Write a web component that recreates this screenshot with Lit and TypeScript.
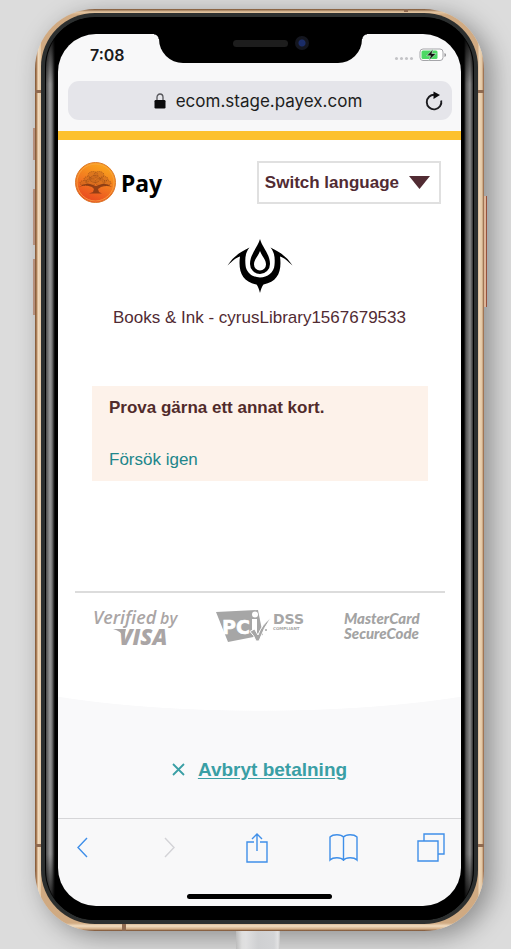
import { LitElement, html, css, svg } from "lit";
import { customElement } from "lit/decorators.js";

const lock = html`<svg class="lock" width="12" height="16" viewBox="0 0 12 16" aria-hidden="true">
  <path d="M3 8V4.300a3 3.300 0 0 1 6 0V8" fill="none" stroke="#55555a" stroke-width="1.300" />
  <rect x="0.500" y="7" width="11" height="8.500" rx="1.200" fill="#0b0b0d" />
</svg>`;

const reload = html`<svg width="18" height="20" viewBox="0 0 18 20" aria-hidden="true">
  <path d="M16.200 9.500a7.300 7.300 0 1 1-6.500-5.700" fill="none" stroke="#1b1b1f" stroke-width="1.900" />
  <path d="M8.500 0.500 15 4 8.500 8z" fill="#0b0b0d" />
</svg>`;

const battery = html`<svg width="28" height="14" viewBox="0 0 28 14" aria-label="Battery charging" role="img">
  <rect x="1" y="1" width="23" height="11.500" rx="3" fill="#fff" stroke="#a5a5a9" />
  <rect x="2.500" y="2.500" width="16" height="8.500" rx="1.500" fill="#4cd964" />
  <path d="M25.500 5v4q1.500-.6 1.500-2t-1.500-2z" fill="#8a8a8e" />
  <path d="M14.300 1 7.600 7.800h4L9.800 12.500l7.400-7h-4.400z" fill="#111" stroke="#d9f7df" stroke-width=".6" />
</svg>`;

const crowns: Array<[number, number, number]> = [
  [9, 21, 4], [13, 17, 4], [18, 13, 5], [24, 13, 5], [29, 17, 4], [32, 21, 4], [16, 20, 5], [25, 20, 5], [20, 17, 5],
];

const coin = html`<svg width="41" height="42" viewBox="0 0 41 42" aria-hidden="true">
  <defs>
    <linearGradient id="coin" x1="0.700" y1="0" x2="0.300" y2="1">
      <stop offset="0" stop-color="#fba91b" /><stop offset=".5" stop-color="#f37a20" /><stop offset="1" stop-color="#e8441f" />
    </linearGradient>
  </defs>
  <circle cx="20.500" cy="20.500" r="20" fill="url(#coin)" stroke="#dc7a2c" stroke-width="1" />
  <circle cx="20.500" cy="20.500" r="18.500" fill="none" stroke="#f9a645" stroke-width=".8" />
  ${crowns.map(([x, y, r]) => svg`<ellipse cx=${x} cy=${y} rx=${r} ry=${r - 1.5} fill="#c9671d" stroke="#8a4616" stroke-width=".8" stroke-dasharray="1 1" fill-opacity=".55" stroke-opacity=".8" />`)}
  <path d="M4 25q6-3 13 0l2 2-1 3-4 1.500h13L24 30l-1-3 3-2q6-2 11 0-5-4-10-3l-6 2-6-2q-6-1-11 3z" fill="#7d3513" fill-opacity=".8" />
</svg>`;

const emblem = html`<svg width="66" height="54" viewBox="0 0 66 54" role="img" aria-label="Books &amp; Ink">
  <path fill-rule="evenodd" d="M33 0C35 8 43 15 43 25a10 10 0 0 1-20 0C23 15 31 8 33 0zM33 12C31.500 17 27 20 27 25.500a6 6 0 0 0 12 0C39 20 34.500 17 33 12z" />
  <path d="M22.500 8.500C18 14 18 20 18.500 26c.5 7.500 7 12.500 14.500 12.500S47 33.500 47.500 26C48 20 48 14 43.500 8.500 53 13 60 18 65.500 26.500 60 21.500 57 18.500 53 17.500 55 32 51 43 36.500 45.500 35 47.500 34 50 33 54 32 50 31 47.500 29.500 45.500 15 43 11 32 13 17.500 9 18.500 6 21.500.5 26.500 6 18 13 13 22.500 8.500z" />
</svg>`;

const visa = html`<svg width="88" height="40" viewBox="0 0 88 40" role="img" aria-label="Verified by VISA" class="brand" fill="#aaa5a5">
  <text x="0" y="15" font-size="18" font-weight="600">Verified</text>
  <text x="67" y="15" font-size="16" font-weight="600">by</text>
  <text x="26" y="36" font-size="22" font-weight="800">VISA</text>
  <path d="M20 20h13l-2 8q-3-6-11-8z" />
</svg>`;

const pci = html`<svg width="88" height="36" viewBox="0 0 88 36" role="img" aria-label="PCI DSS compliant" class="pci">
  <path d="M-2 3 40 1 45 26 10 33z" fill="#a6a6a6" />
  <text x="4" y="25" font-size="19" fill="#fff" stroke="#fff" stroke-width=".6">PC</text>
  <path d="M34 10h5v13h-5z" fill="#fff" /><circle cx="37" cy="5.500" r="3" fill="#fff" />
  <path d="M32 22.500 36.500 20l3.500 6Q44 15 53 9q-7 9-12 23h-3q-2-6-6-9.500z" fill="#a6a6a6" stroke="#fff" stroke-width="1" />
  <circle cx="48" cy="21" r="1" fill="#a6a6a6" />
  <text x="55" y="15" font-size="14" fill="#a6a6a6">DSS</text>
  <text x="55" y="21" font-size="4" fill="#a6a6a6">COMPLIANT</text>
</svg>`;

const mastercard = html`<svg width="80" height="36" viewBox="0 0 80 36" role="img" aria-label="MasterCard SecureCode" class="mc" fill="#a3a3a3">
  <text x="1" y="15" font-size="15">MasterCard</text>
  <text x="1" y="30" font-size="15">SecureCode</text>
</svg>`;

const line = (d: string, w: number, h: number, label: string, off = false) => html`
  <button class="tool ${off ? "off" : ""}" aria-label=${label} ?disabled=${off}>
    <svg width=${w} height=${h} viewBox="0 0 ${w} ${h}" fill="none" stroke="currentColor" stroke-width="1.400"><path d=${d} /></svg>
  </button>`;

@customElement("app-root")
export class AppRoot extends LitElement {
  static styles = css`
    :host { display: block; font-family: "Liberation Sans", Arial, sans-serif; color: #512b33; }
    * { box-sizing: border-box; }
    button { font: inherit; color: inherit; background: none; border: 0; padding: 0; margin: 0; }
    svg { display: block; flex: none; overflow: visible; }
    .stage { position: relative; display: flex; min-height: 100vh; padding: 9px 27px 18px 35px; background: #dcdcdc; overflow: hidden; }
    .cable { position: absolute; bottom: 0; left: 50%; width: 44px; height: 18px; margin-left: -20px; z-index: 1;
      background: linear-gradient(90deg, #bcbcbc, #dedede 6px, #e0e0e1 10px, #cfd0d2 22px, #d3d4d6 38px, #e2e2e3 42px, #c4c4c4); }
    .phone { position: relative; flex: 1; display: flex; padding: 4px 6px 7px; border-radius: 60px;
      background: linear-gradient(90deg, #7a5233, #b98b62 2px, #f1dcc0 3px, #e3c6a2 6px, transparent 6px, transparent calc(100% - 6px), #ecd6ba calc(100% - 5px), #e3c6a2 calc(100% - 2px), #8a5a3a),
        linear-gradient(#7a5233, #e3c6a2 3px, #d0aa82 6px, #d0aa82 calc(100% - 8px), #f1dcc0 calc(100% - 5px), #d3ad85 calc(100% - 2px), #70482e);
      box-shadow: 8px 6px 26px rgb(0 0 0 / 36%); }
    .key { position: absolute; width: 2px; background: #b58f7c; }
    .mute { left: -2px; top: 119px; height: 32px; }
    .up { left: -2px; top: 180px; height: 56px; }
    .down { left: -2px; top: 250px; height: 56px; }
    .power { right: -3px; top: 187px; width: 3px; height: 111px; background: #dcb497; border-right: 1px solid #96503c; }
    .band { position: absolute; background: #8f6a50; }
    .b1 { left: 0; top: 81px; width: 6px; height: 3px; }
    .b2 { right: 0; top: 81px; width: 6px; height: 3px; }
    .b3 { left: 0; bottom: 84px; width: 6px; height: 3px; }
    .b4 { right: 0; bottom: 84px; width: 6px; height: 3px; }
    .b5 { right: 76px; top: 0; width: 4px; height: 3px; }
    .b6 { left: 87px; bottom: 0; width: 4px; height: 7px; }
    .rim { flex: 1; display: flex; padding: 4px; border-radius: 54px; background: #2c2f2f; }
    .edge { flex: 1; display: flex; padding: 0 9px; border-radius: 50px; border: solid #000; border-width: 1px 1px 0;
      background: linear-gradient(#000 12px, transparent 66px, transparent calc(100% - 66px), #000 calc(100% - 12px)),
        linear-gradient(90deg, #4a4a4a, #999 4px, #777 6px, #222 8px, #000 9px, #000 calc(100% - 9px), #555 calc(100% - 7px), #8c8c8c calc(100% - 3px), #333); }
    .face { flex: 1; display: flex; padding: 16px 3px 14px; border-radius: 48px; background: #000; }
    .screen { position: relative; flex: 1; min-width: 0; display: flex; flex-direction: column; border-radius: 38px; overflow: hidden; background: #f8f8f9; }
    .notch { position: absolute; top: 0; left: 50%; width: 203px; height: 29px; margin-left: -101px; background: #000; border-radius: 0 0 24px 24px; display: flex; justify-content: center; }
    .notch::before, .notch::after { content: ""; position: absolute; top: 0; width: 5px; height: 5px; }
    .notch::before { left: -5px; background: radial-gradient(circle at 0 100%, transparent 4px, #000 5px); }
    .notch::after { right: -5px; background: radial-gradient(circle at 100% 100%, transparent 4px, #000 5px); }
    .speaker { width: 55px; height: 7px; margin-top: 6px; border-radius: 4px; background: #1d1d1d; }
    .camera { position: absolute; right: 53px; top: 2px; width: 14px; height: 14px; border-radius: 50%; background: radial-gradient(circle, #1a2c68 3px, #14161f 4px); }
    .status { display: flex; justify-content: space-between; align-items: center; height: 42px; padding: 0 14px 0 32px; font: 600 16px/20px Inter, "Noto Sans", sans-serif; color: #1a1a1c; }
    .right { display: flex; align-items: center; gap: 6px; }
    .dots { display: flex; gap: 2px; padding-top: 6px; }
    .dots i { width: 3px; height: 3px; border-radius: 50%; background: #c3c3c6; }
    .url { display: flex; align-items: center; height: 39px; margin: 5px 9px 0 10px; padding: 0 9px; border-radius: 11px; background: #e5e5ea; color: #1d1d21; }
    .host { flex: 1; display: flex; align-items: center; justify-content: center; gap: 10px; padding-left: 14px; font: 17px/24px Inter, sans-serif; }
    .accent { height: 9px; margin-top: 11px; background: #fdc12d; }
    main { flex: 1; display: flex; flex-direction: column; background: #fff; }
    header { display: flex; align-items: center; justify-content: space-between; padding: 21px 20px 0 17px; }
    .brandmark { display: flex; align-items: center; gap: 5px; font: 700 23px/32px "Noto Sans", "Open Sans", sans-serif; color: #000; }
    .lang { display: flex; align-items: center; gap: 10px; height: 43px; padding: 0 9px 0 6px; border: 2px solid #e0e0e0; font-size: 17px; font-weight: 700; }
    .merchant { display: flex; flex-direction: column; align-items: center; gap: 14px; margin-top: 35px; font-size: 17px; line-height: 22px; fill: #000; }
    .merchant p { margin: 0; }
    .card { margin: 57px 33px 0 34px; padding: 11px 17px 10px; background: #fdf2ea; font-size: 17px; line-height: 22px; }
    .card p { margin: 0 0 30px; font-weight: 700; color: #512b2b; }
    .card a { color: #21868a; text-decoration: none; }
    .logos { display: flex; justify-content: space-between; margin: 110px 16px 0 17px; padding: 16px 22px 0 18px; border-top: 2px solid #dcdcdc; }
    .brand { font-family: "Open Sans", sans-serif; font-style: italic; }
    .pci { font-family: "DejaVu Sans", sans-serif; font-weight: 700; }
    .mc { font-family: Lato, sans-serif; font-style: italic; font-weight: 900; }
    footer { flex: 1; margin-top: 48px; padding: 24px 0 0; display: flex; justify-content: center; gap: 13px; align-items: center; color: #3a9fa5;
      background: radial-gradient(ellipse 78% 60px at 50% -46px, #fff 99%, #f9f9fa 100%); }
    footer a { color: inherit; font-size: 19px; line-height: 26px; font-weight: 700; text-underline-offset: 2px; }
    nav { display: flex; align-items: center; justify-content: space-between; height: 61px; padding: 0 14px 3px 8px; border-top: 1px solid #d6d6d8; color: #3f8fe9; }
    .tool { display: flex; justify-content: center; width: 32px; }
    .off { color: #d3d3d7; }
    .home { align-self: center; width: 145px; height: 5px; margin: 15px 0 7px; border-radius: 3px; background: #000; }
  `;

  render() {
    return html`
      <div class="stage">
        <div class="cable"></div>
        <div class="phone">
          <i class="key mute"></i><i class="key up"></i><i class="key down"></i><i class="key power"></i>
          <i class="band b1"></i><i class="band b2"></i><i class="band b3"></i><i class="band b4"></i><i class="band b5"></i><i class="band b6"></i>
          <div class="rim"><div class="edge"><div class="face"><div class="screen">
            <div class="notch"><div class="speaker"></div><div class="camera"></div></div>
            <div class="status"><time>7:08</time>
              <div class="right"><div class="dots"><i></i><i></i><i></i><i></i></div>${battery}</div>
            </div>
            <div class="url"><div class="host">${lock}<span>ecom.stage.payex.com</span></div>
              <button aria-label="Reload">${reload}</button></div>
            <div class="accent"></div>
            <main>
              <header>
                <div class="brandmark">${coin}<span>Pay</span></div>
                <button class="lang">Switch language
                  <svg width="21" height="13" viewBox="0 0 21 13" aria-hidden="true"><path d="M0 0h21L10.500 13z" fill="#512b33" /></svg>
                </button>
              </header>
              <section class="merchant">${emblem}<p>Books &amp; Ink - cyrusLibrary1567679533</p></section>
              <section class="card"><p>Prova gärna ett annat kort.</p><a href="#retry">Försök igen</a></section>
              <section class="logos">${visa}${pci}${mastercard}</section>
              <footer>
                <svg width="13" height="13" viewBox="0 0 13 13" aria-hidden="true"><path d="M1 1l11 11M12 1 1 12" stroke="currentColor" stroke-width="1.800" /></svg>
                <a href="#cancel">Avbryt betalning</a>
              </footer>
            </main>
            <nav>
              ${line("M11 1 2 10.500 11 20", 13, 21, "Back")}
              ${line("M2 1l9 9.500L2 20", 13, 21, "Forward", true)}
              ${line("M9 10H2v20h20V10h-7M12 19V2M7 7l5-5 5 5", 24, 31, "Share")}
              ${line("M14.500 4C12 1 4 1 1 4v23c3-3 11-3 13.500 0M14.500 4C17 1 25 1 28 4v23c-3-3-11-3-13.500 0M14.500 4v24", 29, 29, "Bookmarks")}
              ${line("M1 8h20v20H1zM7 8V1h20v20h-6", 28, 29, "Tabs")}
            </nav>
            <div class="home"></div>
          </div></div></div></div>
        </div>
      </div>`;
  }
}
